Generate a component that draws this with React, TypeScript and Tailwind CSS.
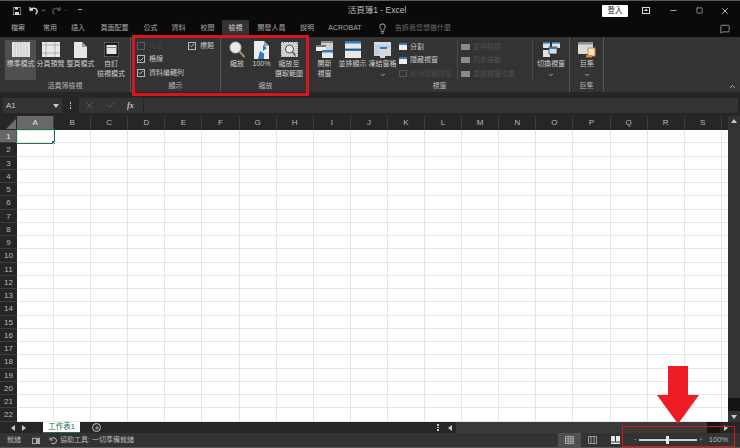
import React from 'react';
import { ChevronDown, ChevronUp, MessageSquare, Lightbulb, X, Minus, Square, Check, Plus } from 'lucide-react';

const font = "font-['Liberation_Sans','Noto_Sans_CJK_TC',sans-serif]";
const columns = 'ABCDEFGHIJKLMNOPQRS'.split('');
const rows = Array.from({ length: 22 }, (_, i) => i + 1);

const tabs = [
  { label: '檔案', w: 'w-[36px]' },
  { label: '常用', w: 'w-[28px]' },
  { label: '插入', w: 'w-[28px]' },
  { label: '頁面配置', w: 'w-[45px]' },
  { label: '公式', w: 'w-[27px]' },
  { label: '資料', w: 'w-[29px]' },
  { label: '校閱', w: 'w-[29px]' },
  { label: '檢視', w: 'w-[27px]', active: true },
  { label: '開發人員', w: 'w-[45px]' },
  { label: '說明', w: 'w-[26px]' },
  { label: 'ACROBAT', w: 'w-[50px]' },
];

const PageIcon = ({ kind }: { kind: string }) => {
  if (kind === 'normal')
    return (
      <svg width="18" height="15" viewBox="0 0 18 15">
        <rect width="18" height="15" fill="#e4e4e4" />
        <path d="M3 0v15M6 0v15M9 0v15M12 0v15M15 0v15" stroke="#b5b5b5" strokeWidth="0.6" />
      </svg>
    );
  if (kind === 'break')
    return (
      <svg width="18" height="15" viewBox="0 0 18 15">
        <rect width="18" height="15" fill="#e8e8e8" />
        <path d="M0 3h18M0 11h18M4 0v15M13 0v15" stroke="#9a9a9a" strokeWidth="0.7" />
      </svg>
    );
  if (kind === 'page')
    return (
      <svg width="13" height="16" viewBox="0 0 13 16">
        <path d="M0 0h8l5 5v11H0z" fill="#e6e6e6" />
        <path d="M8 0v5h5z" fill="#9c9c9c" />
      </svg>
    );
  return (
    <svg width="15" height="15" viewBox="0 0 15 15">
      <rect width="15" height="15" fill="#1b1b1b" stroke="#8a8a8a" />
      <rect x="2.5" y="3" width="10" height="9" fill="#e4e4e4" />
      <path d="M2.5 5.5h10" stroke="#888" />
    </svg>
  );
};

const WindowsIcon = () => (
  <svg width="17" height="17" viewBox="0 0 17 17">
    <rect x="5" y="0" width="12" height="9" fill="#cfcfcf" />
    <rect x="5" y="0" width="12" height="2" fill="#8a8a8a" />
    <rect x="0" y="4" width="10" height="6" fill="#eeeeee" />
    <rect x="0" y="4" width="10" height="2" fill="#777" />
    <rect x="6" y="9" width="11" height="8" fill="#e8e8e8" />
    <rect x="6" y="9" width="11" height="2.5" fill="#2f7cc0" />
  </svg>
);

const ArrangeIcon = () => (
  <svg width="16" height="17" viewBox="0 0 16 17">
    <rect width="16" height="17" fill="#e8e8e8" />
    <rect width="16" height="2.5" fill="#2f7cc0" />
    <rect y="7.5" width="16" height="2.5" fill="#2f7cc0" />
    <rect y="8" width="16" height="0.5" fill="#333" />
  </svg>
);

const FreezeIcon = () => (
  <svg width="17" height="16" viewBox="0 0 17 16">
    <rect width="17" height="14" fill="#d8d8d8" />
    <rect x="1" y="3" width="4" height="10" fill="#b7cfe6" />
    <rect x="5" y="3" width="11" height="3" fill="#b7cfe6" />
    <rect x="6" y="5" width="7" height="2" fill="#2f7cc0" />
    <rect x="6" y="14" width="5" height="2" fill="#d8d8d8" />
  </svg>
);

const SwitchIcon = () => (
  <svg width="17" height="15" viewBox="0 0 17 15">
    <rect width="7" height="6" fill="#e2e2e2" />
    <rect x="9" width="8" height="6" fill="#e2e2e2" />
    <rect width="7" height="1.6" fill="#2f7cc0" />
    <rect x="9" width="8" height="1.6" fill="#2f7cc0" />
    <rect y="8" width="7" height="7" fill="#e2e2e2" />
    <rect x="6" y="5" width="8" height="7" fill="#cfe0ee" stroke="#333" strokeWidth="0.7" />
    <rect x="6" y="5" width="8" height="2" fill="#2f7cc0" />
  </svg>
);

const MacroIcon = () => (
  <svg width="18" height="16" viewBox="0 0 18 16">
    <rect width="15" height="12" fill="#d9d9d9" />
    <rect width="15" height="2.5" fill="#8e8e8e" />
    <rect x="10" y="6" width="7" height="8" fill="#f3e2c6" stroke="#d28a35" />
    <rect x="8" y="13" width="6" height="2.5" fill="#d28a35" />
  </svg>
);

const ZoomIcon = () => (
  <svg width="16" height="17" viewBox="0 0 16 17">
    <circle cx="6.5" cy="6.5" r="5.5" fill="#e9e9e9" stroke="#c0c0c0" />
    <path d="M10.5 10.5L15.5 16" stroke="#a98c6a" strokeWidth="2" />
  </svg>
);

const HundredIcon = () => (
  <svg width="15" height="18" viewBox="0 0 15 18">
    <path d="M0 0h10l5 5v13H0z" fill="#ececec" />
    <path d="M10 0v5h5z" fill="#9c9c9c" />
    <path d="M9 4l4 3-4 3zM6 10l4 2.5v5.5H4z" fill="#2f7cc0" />
  </svg>
);

const ZoomSelectionIcon = () => (
  <svg width="17" height="15" viewBox="0 0 17 15">
    <rect x="0.5" y="0.5" width="16" height="14" fill="#cfcfcf" stroke="#e8e8e8" strokeDasharray="1.5 1" />
    <circle cx="8.5" cy="7" r="4" fill="#e9e9e9" stroke="#555" />
    <path d="M11.5 10l3 3.5" stroke="#555" strokeWidth="1.5" />
  </svg>
);

const SmallWindow = () => (
  <svg width="8" height="7" viewBox="0 0 8 7" className="shrink-0">
    <rect width="8" height="7" fill="#eeeeee" />
    <rect width="8" height="2" fill="#2f7cc0" />
  </svg>
);

const RibbonButton = ({ icon, label, w, selected, chevron }: { icon: React.ReactNode; label: string; w: string; selected?: boolean; chevron?: boolean }) => (
  <div className={`flex flex-col items-center ${w} h-[40px] ${selected ? 'bg-[#4f4f4f]' : ''}`}>
    <div className="h-[19px] flex items-center justify-center">{icon}</div>
    <div className="text-[7px] leading-[10px] text-center text-[#cfcfcf] whitespace-pre">{label}</div>
    {chevron && <ChevronDown size={6} className="text-[#cfcfcf] mt-[3px]" strokeWidth={3} />}
  </div>
);

const Group = ({ label, w, children, divider = true }: { label: string; w: string; children: React.ReactNode; divider?: boolean }) => (
  <div className={`${w} shrink-0 flex flex-col h-full ${divider ? 'border-r border-[#555]' : ''}`}>
    <div className="flex-1 flex min-h-0 pt-[3px]">{children}</div>
    <div className="h-[12px] text-[7px] leading-[12px] text-center text-[#b8b8b8]">{label}</div>
  </div>
);

const CheckItem = ({ label, checked, dim }: { label: string; checked?: boolean; dim?: boolean }) => (
  <div className="flex items-center gap-[4px] h-[13.5px]">
    <span className={`w-[8px] h-[8px] border flex items-center justify-center ${dim ? 'border-[#5a5a5a]' : 'border-[#b5b5b5]'}`}>
      {checked && <Check size={7} strokeWidth={3} className="text-[#e4e4e4]" />}
    </span>
    <span className={`text-[7px] ${dim ? 'text-[#3e3e3e]' : 'text-[#c8c8c8]'}`}>{label}</span>
  </div>
);

const DimRow = ({ label }: { label: string }) => (
  <div className="flex items-center gap-[3px] h-[13.5px]">
    <span className="w-[9px] h-[6px] bg-[#8a8a8a] shrink-0" />
    <span className="text-[7px] text-[#4f4f4f] whitespace-nowrap">{label}</span>
  </div>
);

const Ribbon = () => (
  <div className="h-[55px] bg-[#333333] flex relative">
    <Group label="活頁簿檢視" w="w-[131px]">
      <div className="flex pl-[5px]">
        <RibbonButton w="w-[31px]" icon={<PageIcon kind="normal" />} label="標準模式" selected />
        <RibbonButton w="w-[29px]" icon={<PageIcon kind="break" />} label="分頁預覽" />
        <RibbonButton w="w-[31px]" icon={<PageIcon kind="page" />} label="整頁模式" />
        <RibbonButton w="w-[30px]" icon={<PageIcon kind="custom" />} label={'自訂\n檢視模式'} />
      </div>
    </Group>
    <Group label="顯示" w="w-[90px]">
      <div className="pl-[6px] w-[57px] -mt-[1px]">
        <CheckItem label="尺規" dim />
        <CheckItem label="格線" checked />
        <CheckItem label="資料編輯列" checked />
      </div>
      <div className="-mt-[1px]">
        <CheckItem label="標題" checked />
      </div>
    </Group>
    <Group label="縮放" w="w-[89px]" divider={false}>
      <div className="flex pl-[4px]">
        <RibbonButton w="w-[24px]" icon={<ZoomIcon />} label="縮放" />
        <RibbonButton w="w-[25px]" icon={<HundredIcon />} label="100%" />
        <RibbonButton w="w-[30px]" icon={<ZoomSelectionIcon />} label={'縮放至\n選取範圍'} />
      </div>
    </Group>
    <Group label="視窗" w="w-[260px]">
      <div className="flex pl-[1px]">
        <RibbonButton w="w-[27px]" icon={<WindowsIcon />} label={'開新\n視窗'} />
        <RibbonButton w="w-[29px]" icon={<ArrangeIcon />} label="並排顯示" />
        <RibbonButton w="w-[31px]" icon={<FreezeIcon />} label="凍結窗格" chevron />
      </div>
      <div className="w-[60px] pl-[1px] border-r border-[#484848] h-[40px] shrink-0">
        <div className="flex items-center gap-[3px] h-[13.5px] text-[7px] text-[#c8c8c8]"><SmallWindow />分割</div>
        <div className="flex items-center gap-[3px] h-[13.5px] text-[7px] text-[#c8c8c8]"><SmallWindow />隱藏視窗</div>
        <div className="flex items-center gap-[3px] h-[13.5px] text-[7px] text-[#4a4a4a]">
          <span className="w-[8px] h-[7px] border border-[#555] shrink-0" />取消隱藏視窗
        </div>
      </div>
      <div className="w-[75px] pl-[3px] border-r border-[#484848] h-[40px] shrink-0 overflow-hidden">
        <DimRow label="並排檢視" />
        <DimRow label="同步捲動" />
        <DimRow label="重設視窗位置" />
      </div>
      <div className="pl-[3px]">
        <RibbonButton w="w-[30px]" icon={<SwitchIcon />} label="切換視窗" chevron />
      </div>
    </Group>
    <Group label="巨集" w="w-[34px]">
      <div className="pl-[2px]">
        <RibbonButton w="w-[30px]" icon={<MacroIcon />} label="巨集" chevron />
      </div>
    </Group>
    <div className="flex-1 flex items-end justify-end pr-[3px] pb-[1px]">
      <ChevronUp size={9} className="text-[#c8c8c8]" />
    </div>
  </div>
);

const Sheet = () => (
  <div className="flex-1 min-w-0 overflow-hidden bg-white flex flex-col">
    <div className="flex h-[14px] bg-[#262626] shrink-0">
      <div className="w-[17px] shrink-0 flex items-end justify-end pr-[1px] pb-[1px]">
        <svg width="10" height="10" viewBox="0 0 10 10"><path d="M10 0v10H0z" fill="#6e6e6e" /></svg>
      </div>
      {columns.map((c, i) => (
        <div
          key={c}
          className={`w-[37.1px] shrink-0 text-center text-[8px] leading-[14px] border-r border-[#3d3d3d] ${i === 0 ? 'bg-[#686868] text-[#e0e0e0] border-b border-b-[#217346]' : 'text-[#b8b8b8]'}`}
        >
          {c}
        </div>
      ))}
    </div>
    {rows.map(r => (
      <div key={r} className="flex h-[13.25px] shrink-0">
        <div className={`w-[17px] shrink-0 text-center text-[8px] leading-[13px] border-b border-[#3d3d3d] ${r === 1 ? 'bg-[#686868] text-[#e8e8e8]' : 'bg-[#262626] text-[#b8b8b8]'}`}>
          {r}
        </div>
        {columns.map((c, i) => (
          <div
            key={c}
            className={`w-[37.1px] shrink-0 border-r border-b border-[#e6e6e6] relative ${r === 1 && i === 0 ? 'border-[#217346] border outline outline-[#217346]' : ''}`}
          >
            {r === 1 && i === 0 && <span className="absolute -right-[2px] -bottom-[2px] w-[3px] h-[3px] bg-[#217346]" />}
          </div>
        ))}
        <div className="flex-1 border-b border-[#e6e6e6]" />
      </div>
    ))}
  </div>
);

const Triangle = ({ dir }: { dir: 'left' | 'right' | 'up' | 'down' }) => {
  const d = { left: 'M5 0v6L1 3z', right: 'M1 0v6l4-3z', up: 'M0 5h6L3 1z', down: 'M0 1h6L3 5z' }[dir];
  return (
    <svg width="6" height="6" viewBox="0 0 6 6" className="shrink-0">
      <path d={d} fill="#c8c8c8" />
    </svg>
  );
};

export default function App() {
  return (
    <div className={`relative w-[740px] h-[448px] overflow-hidden bg-[#262626] flex flex-col ${font}`}>
      {/* Title bar */}
      <div className="h-[20px] shrink-0 bg-[#0a0a0a] border-t border-[#5c5c5c] flex items-center relative">
        <div className="flex items-center pl-[13px] text-[#d0d0d0]">
          <svg width="8" height="8" viewBox="0 0 8 8"><path d="M0 0h6.5L8 1.5V8H0z" fill="none" stroke="#d8d8d8" /><path d="M2 0h3v2.5H2zM2 5h4v3H2z" fill="#d8d8d8" /></svg>
          <svg width="10" height="9" viewBox="0 0 10 9" className="ml-[8px]"><path d="M1 1v3h3M1.5 4C3 1.5 7 1.5 8 4.5c.4 1.5-.3 3-1.5 3.8" fill="none" stroke="#e4e4e4" strokeWidth="1.3" /></svg>
          <ChevronDown size={5} strokeWidth={3} className="ml-[2px]" />
          <svg width="10" height="9" viewBox="0 0 10 9" className="ml-[5px]"><path d="M9 1v3H6M8.5 4C7 1.5 3 1.5 2 4.5c-.4 1.5.3 3 1.5 3.8" fill="none" stroke="#555" strokeWidth="1.3" /></svg>
          <ChevronDown size={5} strokeWidth={3} className="ml-[2px] text-[#555]" />
          <span className="ml-[10px] w-[4px] h-[3px] border-t border-[#aaa]" />
        </div>
        <div className="flex-1 text-center text-[8.5px] text-[#bdbdbd] pl-[70px]">活頁簿1 - Excel</div>
        <div className="flex items-center text-[#d8d8d8] pr-[10px]">
          <div className="w-[26px] h-[12px] bg-white rounded-[1px] text-[7.5px] leading-[12px] text-center text-[#222]">登入</div>
          <svg width="8" height="7" viewBox="0 0 8 7" className="ml-[14px]"><rect x="0.5" y="0.5" width="7" height="6" fill="none" stroke="#d8d8d8" /><path d="M4 1.5L6 4H2z" fill="#d8d8d8" /></svg>
          <Minus size={9} className="ml-[19px]" />
          <Square size={7} className="ml-[18px]" />
          <X size={10} className="ml-[17px]" />
        </div>
      </div>

      {/* Tabs */}
      <div className="h-[17px] shrink-0 bg-[#0a0a0a] flex items-stretch text-[7px] text-[#a8a8a8]">
        {tabs.map(t => (
          <div key={t.label} className={`${t.w} shrink-0 flex items-center justify-center ${t.active ? 'bg-[#333333] text-[#d8d8d8]' : ''}`}>
            {t.label}
          </div>
        ))}
        <Lightbulb size={11} className="self-center ml-[7px] text-[#c8c8c8]" />
        <span className="self-center ml-[7px] text-[#6e6e6e]">告訴我您想做什麼</span>
        <MessageSquare size={10} className="self-center ml-auto mr-[10px] text-[#a8a8a8]" />
      </div>

      <Ribbon />

      {/* Formula bar */}
      <div className="flex h-[15px] shrink-0 mt-[6px] items-stretch">
        <div className="ml-[3px] w-[59px] bg-[#333333] flex items-center justify-between px-[3px] text-[#c8c8c8] text-[8px]">
          A1
          <Triangle dir="down" />
        </div>
        <div className="w-[17px] flex flex-col items-center justify-center gap-[1px]">
          <span className="w-[1.5px] h-[1.5px] bg-[#c8c8c8]" />
          <span className="w-[1.5px] h-[1.5px] bg-[#c8c8c8]" />
          <span className="w-[1.5px] h-[1.5px] bg-[#c8c8c8]" />
        </div>
        <div className="w-[64px] bg-[#333333] flex items-center text-[#6a6a6a] pl-[6px] gap-[12px]">
          <X size={9} />
          <Check size={9} />
          <span className="text-[8px] italic font-bold text-[#c8c8c8] font-['Liberation_Serif',serif]">fx</span>
        </div>
        <div className="flex-1 ml-[1px] mr-[2px] bg-[#333333]" />
      </div>

      {/* Sheet area */}
      <div className="mt-[3px] flex h-[306px] shrink-0">
        <Sheet />
        <div className="w-[12px] shrink-0 bg-[#333333] flex flex-col items-center pt-[2px] pb-[2px]">
          <Triangle dir="up" />
          <div className="flex-1" />
          <div className="w-full h-[13px] bg-[#141414]" />
          <div className="h-[3px]" />
          <Triangle dir="down" />
        </div>
      </div>

      {/* Sheet tabs */}
      <div className="h-[11px] shrink-0 flex items-center bg-[#262626]">
        <div className="w-[43px] pl-[10px] flex gap-[5px]">
          <Triangle dir="left" />
          <Triangle dir="right" />
        </div>
        <div className="w-[37px] h-full bg-white text-[#217346] text-[7.5px] leading-[10px] text-center border-b border-[#217346]">工作表1</div>
        <div className="ml-[12px] w-[9px] h-[9px] rounded-full border border-[#c8c8c8] flex items-center justify-center text-[#c8c8c8]">
          <Plus size={6} strokeWidth={3} />
        </div>
        <div className="ml-[336px] flex flex-col gap-[1px]">
          <span className="w-[1.5px] h-[1.5px] bg-[#c8c8c8]" />
          <span className="w-[1.5px] h-[1.5px] bg-[#c8c8c8]" />
          <span className="w-[1.5px] h-[1.5px] bg-[#c8c8c8]" />
        </div>
        <div className="ml-[8px] w-[8px]"><Triangle dir="left" /></div>
        <div className="flex-1 h-full bg-[#3a3a3a] ml-[1px] flex justify-end items-stretch mr-[15px]">
          <div className="w-[13px] bg-[#141414]" />
        </div>
        <div className="w-[6px] mr-[11px] -ml-[12px]"><Triangle dir="right" /></div>
      </div>

      {/* Status bar */}
      <div className="h-[14px] shrink-0 bg-[#333333] flex items-center text-[7px] text-[#b8b8b8]">
        <span className="ml-[7px]">就緒</span>
        <svg width="8" height="8" viewBox="0 0 8 8" className="ml-[11px]"><rect width="8" height="8" fill="#a8a8a8" /><rect width="8" height="2" fill="#444" /><rect x="1" y="3" width="3" height="4" fill="#3a3a3a" /></svg>
        <svg width="9" height="9" viewBox="0 0 9 9" className="ml-[9px]"><path d="M2 3a3 3 0 1 1 .5 4M1 1.5V4h2.5" fill="none" stroke="#c8c8c8" /></svg>
        <span className="ml-[2px]">協助工具: 一切準備就緒</span>
        <div className="ml-auto flex items-stretch h-full">
          <div className="w-[23px] bg-[#505050] flex items-center justify-center">
            <svg width="9" height="8" viewBox="0 0 9 8"><path d="M.5.5h8v7h-8zM3.2.5v7M5.9.5v7M.5 2.8h8M.5 5.2h8" fill="none" stroke="#c8c8c8" strokeWidth="0.7" /></svg>
          </div>
          <div className="w-[23px] flex items-center justify-center">
            <svg width="9" height="8" viewBox="0 0 9 8"><path d="M.5.5h8v7h-8zM3 .5v7M6 .5v7" fill="none" stroke="#9a9a9a" /></svg>
          </div>
          <div className="w-[23px] flex items-center justify-center">
            <svg width="9" height="8" viewBox="0 0 9 8"><rect width="9" height="8" fill="#e8e8e8" /><path d="M4.5 0v6M0 6h9" stroke="#333" /></svg>
          </div>
        </div>
        <div className="flex items-center w-[113px] pl-[6px] pr-[12px]">
          <span className="text-[#8a8a8a]">−</span>
          <div className="relative flex-1 mx-[2px] h-[1.5px] bg-[#d0d0d0]">
            <span className="absolute left-[27px] -top-[3px] w-[3px] h-[8px] bg-[#e8e8e8]" />
          </div>
          <span className="text-[#8a8a8a]">+</span>
          <span className="ml-[6px] text-[7.5px]">100%</span>
        </div>
      </div>
      <div className="h-[1px] shrink-0 bg-[#555]" />

      {/* Red annotations */}
      <div className="absolute left-[132px] top-[35px] w-[177px] h-[61px] border-[3px] border-[#d9161f]" />
      <div className="absolute left-[622px] top-[426px] w-[113px] h-[21px] border border-[#d9161f]" />
      <svg width="42" height="58" viewBox="0 0 42 58" className="absolute left-[657px] top-[366px]">
        <path d="M11 0h20v29h11L21 58 0 29h11z" fill="#ee1c25" />
      </svg>
    </div>
  );
}
